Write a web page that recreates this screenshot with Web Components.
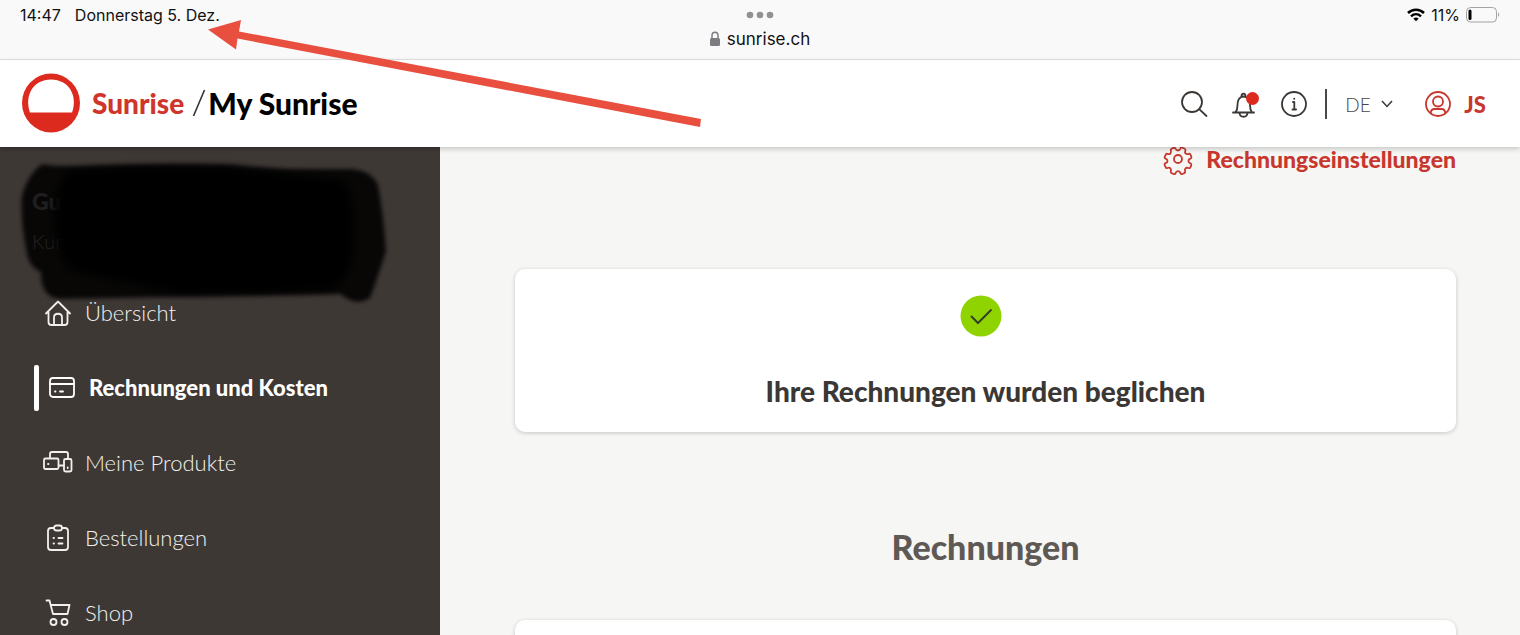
<!DOCTYPE html>
<html lang="de">
<head>
<meta charset="utf-8">
<meta name="viewport" content="width=device-width, initial-scale=1">
<title>My Sunrise – Rechnungen und Kosten</title>
<style>
  html, body { margin: 0; height: 100%; }
  body { font-family: Lato, "Open Sans", sans-serif; color: #3b3734; background: #f6f6f4; }
</style>
</head>
<body>
<sunrise-app></sunrise-app>
<script>
const define = (name, html, setup) => customElements.define(name, class extends HTMLElement {
  constructor() {
    super();
    const t = document.createElement('template');
    t.innerHTML = html;
    this.attachShadow({ mode: 'open' }).append(t.content.cloneNode(true));
  }
  connectedCallback() { if (setup) setup(this, this.shadowRoot); }
});

/* Line icons, drawn on a 28 unit grid */
const ICONS = {
  search: '<circle cx="12" cy="12" r="10"/><path d="M19.200 19.200L26.500 26"/>',
  bell: '<path d="M3 22.500h21M5.500 22.500c1.500-2 2-3.500 2-7.500 0-5 2.200-8.500 6-8.500s6.500 3.500 6.500 8.500c0 4 .5 5.500 2 7.500M11.500 6.300c0-3.500 4-3.500 4 0M9.500 23c.5 5 7.500 5 8 0"/><circle cx="22.500" cy="8.500" r="6.500" fill="#dc2a1e" stroke="none"/>',
  info: '<circle cx="14" cy="14" r="12"/><path d="M13 12h1.300v7.500M12.500 19.500h3.600"/><circle cx="14.200" cy="8.700" r="1" fill="currentColor" stroke="none"/>',
  user: '<circle cx="14" cy="14" r="12"/><circle cx="14" cy="11.500" r="5"/><path d="M6.800 23c0-2.800 2-4 4-4h6.400c2 0 4 1.200 4 4"/>',
  gear: '<circle cx="14" cy="14" r="4"/><path d="M11.500 3.500q.8 2 2.500 2t2.500-2q.3-1.500 2-.8l2.200 1q1.300.7.600 2.100-.7 1.800.400 2.700t2.900.400q1.500-.5 2 1l.8 2q.3 1.300-1.100 1.800-1.900.8-1.900 2.300t1.900 2.300q1.400.5 1 1.800l-.9 2.200q-.6 1.300-2 .7-1.800-.6-2.900.4t-.4 2.900q.5 1.300-.8 1.900l-2 .8q-1.500.5-1.900-.9-.7-1.900-2.400-1.900t-2.500 2q-.5 1.400-1.900.8l-2-.9q-1.300-.6-.8-2 .7-1.800-.400-2.800t-2.900-.3q-1.400.5-1.900-.9l-.9-2q-.5-1.400.9-1.900 1.900-.7 1.900-2.300t-1.900-2.300q-1.400-.5-.9-1.800l.9-2q.600-1.400 1.900-.9 1.800.6 2.900-.4t.4-2.800q-.5-1.400.8-2l2.100-.9q1.300-.5 1.800.8z"/>',
  home: '<path d="M2 14.500L14 2.500l12 12M4.500 13v10c0 2 1 3 3 3h13c2 0 3-1 3-3V13M10 26v-7.500c0-5 8-5 8 0V26"/>',
  card: '<rect x="2" y="4" width="24" height="19" rx="3"/><path d="M2 10h24M7 17.500h.5M12 17.500h3"/>',
  devices: '<path d="M6 9V5c0-1.500.5-2 2-2h14c1.500 0 2 .5 2 2v5M15 16.500h5"/><rect x="0" y="9.500" width="14.500" height="10.500" rx="1.500"/><rect x="20" y="10" width="7.500" height="12.500" rx="1.500"/><path d="M4 15h.5M23.700 18.500v.5"/>',
  clipboard: '<path d="M10 4H7C5 4 4 5 4 7v16c0 2 1 3 3 3h14c2 0 3-1 3-3V7c0-2-1-3-3-3h-3"/><rect x="10" y="1.500" width="8" height="5" rx="2.500"/><path d="M9.500 14h.5M14.500 14h4M9.500 19.500h.5M14.500 19.500h4"/>',
  cart: '<path d="M2.500 1.500h3l3.500 13.500h14.500L25.500 6H6.800"/><circle cx="9.500" cy="23" r="3"/><circle cx="20.500" cy="23" r="3"/>'
};
define('line-icon', `<style>
  :host { display: block; flex: none; width: 28px; height: 28px; }
  svg { display: block; width: 100%; height: 100%; overflow: visible; fill: none; stroke: currentColor; stroke-width: 1.800; stroke-linecap: round; stroke-linejoin: round; }
</style><svg viewBox="0 0 28 28" aria-hidden="true"></svg>`,
  (el, root) => { root.querySelector('svg').innerHTML = ICONS[el.getAttribute('name')]; });

define('status-bar', `<style>
  :host { display: grid; grid-template-columns: 1fr auto 1fr; align-items: start; height: 60px; box-sizing: border-box; padding: 0 20px; background: #f9f9f9; border-bottom: 1px solid #e2e2e2; color: #111; font: 16px/30px Inter, sans-serif; flex: none; }
  .left, .right { display: flex; align-items: center; }
  .left { gap: 14px; }
  .right { justify-content: flex-end; gap: 6px; }
  .center { display: flex; flex-direction: column; align-items: center; }
  .dots { display: block; margin: 11px 0 8px; }
  .site { display: flex; align-items: center; gap: 7px; font-size: 17px; line-height: 24px; }
  svg { display: block; }
</style>
<div class="left"><span>14:47</span><span>Donnerstag 5. Dez.</span></div>
<div class="center">
  <svg class="dots" width="28" height="8" fill="#929292" aria-hidden="true"><circle cx="4" cy="4" r="3.300"/><circle cx="14" cy="4" r="3.300"/><circle cx="24" cy="4" r="3.300"/></svg>
  <div class="site"><svg width="10" height="16" aria-hidden="true"><rect y="7" width="10" height="8" rx="1.500" fill="#7c7c80"/><path d="M2 8V4.500c0-4.500 6-4.500 6 0V8" fill="none" stroke="#7c7c80" stroke-width="1.500"/></svg><span>sunrise.ch</span></div>
</div>
<div class="right">
  <svg width="18" height="14" viewBox="0 0 18 14" fill="none" stroke="#000" stroke-width="2.500" aria-hidden="true"><path d="M1 5C5.500.6 12.500.6 17 5M4 8.300c3-2.800 7-2.800 10 0"/><path d="M6.300 10.500c1.600-1.400 3.800-1.400 5.400 0L9 13.300z" fill="#000" stroke="none"/></svg>
  <span>11%</span>
  <svg width="34" height="16" aria-hidden="true"><rect x=".5" y=".5" width="30" height="14.500" rx="4" fill="none" stroke="#a3a3a3"/><rect x="2.500" y="2.500" width="3" height="10.500" rx="1.500"/><path d="M32 5.500q2.500 2.200 0 4.500z" fill="#a3a3a3"/></svg>
</div>`);

define('brand-mark', `<style>
  :host { display: block; }
  a { display: flex; align-items: center; color: #000; text-decoration: none; font-weight: 900; font-size: 30px; line-height: 36px; }
  .name { color: #d0352b; font-size: 28px; margin: 0 8px 0 12px; }
  svg { display: block; }
</style>
<a href="#"><svg width="58" height="60" viewBox="0 0 58 60" aria-hidden="true"><ellipse cx="29" cy="30" rx="29" ry="29.500" fill="#dc2a1e"/><path d="M8 39.500C2 23 11 6.500 29 6.500S56 23 50 39.500z" fill="#fff"/></svg><span class="name">Sunrise</span><svg width="16" height="32" aria-hidden="true"><path d="M1.500 29L12.500 3" stroke="#333" stroke-width="1.600"/></svg><span>My Sunrise</span></a>`);

define('site-header', `<style>
  :host { display: flex; align-items: center; justify-content: space-between; height: 87px; box-sizing: border-box; padding: 0 34px 2px 22px; background: #fff; box-shadow: 0 2px 5px #0003; position: relative; z-index: 1; flex: none; }
  .tools { display: flex; align-items: center; color: #3b3734; padding-top: 2px; }
  button { display: block; padding: 0; border: 0; background: none; color: inherit; margin-right: 22px; }
  .rule { width: 2px; height: 30px; background: #4a4644; margin: 0 18px 0 -5px; }
  label { display: flex; align-items: center; gap: 10px; margin-right: 31px; }
  select { appearance: none; border: 0; padding: 2px 0 0; margin: 0; background: none; color: #4a4644; font: 300 19px/28px Lato, sans-serif; width: 26px; }
  .account { display: flex; align-items: center; gap: 12px; color: #c8372d; text-decoration: none; font-weight: 900; font-size: 22px; line-height: 28px; }
  .account span { padding-top: 2px; }
</style>
<brand-mark></brand-mark>
<div class="tools">
  <button type="button" aria-label="Suche"><line-icon name="search"></line-icon></button>
  <button type="button" aria-label="Benachrichtigungen"><line-icon name="bell"></line-icon></button>
  <button type="button" aria-label="Information"><line-icon name="info"></line-icon></button>
  <span class="rule"></span>
  <label><select aria-label="Sprache"><option>DE</option></select><svg width="12" height="8" fill="none" stroke="#3b3734" stroke-width="1.500" aria-hidden="true"><path d="M1 1l5 5.500L11 1"/></svg></label>
  <a class="account" href="#"><line-icon name="user"></line-icon><span>JS</span></a>
</div>`);

define('nav-item', `<style>
  :host { display: block; }
  a { display: flex; align-items: center; height: 75px; padding-left: 10px; gap: 13px; color: #f2f0ee; text-decoration: none; font-weight: 300; font-size: 22px; line-height: 28px; }
  :host([active]) a { padding-left: 0; font-weight: 900; color: #fff; }
  :host([active]) a::before { content: ""; width: 5px; height: 46px; border-radius: 2px; background: #fff; margin-right: -4px; }
</style><a href="#"><line-icon></line-icon><span><slot></slot></span></a>`,
  (el, root) => {
    const icon = document.createElement('line-icon');
    icon.setAttribute('name', el.getAttribute('icon'));
    root.querySelector('line-icon').replaceWith(icon);
    if (el.hasAttribute('active')) root.querySelector('a').setAttribute('aria-current', 'page');
  });

define('side-bar', `<style>
  :host { display: block; position: relative; background: #3e3835; }
  header { height: 128px; box-sizing: border-box; padding: 40px 32px 0; color: #fff; }
  h2, p { margin: 0; line-height: 28px; }
  h2 { font-size: 23px; font-weight: 900; }
  p { font-size: 20px; font-weight: 300; margin-top: 12px; }
  nav { padding-left: 34px; }
  .marker { position: absolute; left: 0; top: 0; pointer-events: none; }
</style>
<header><h2>Guten Tag</h2><p>Kundennummer</p></header>
<svg class="marker" width="440" height="170" aria-hidden="true">
  <defs>
    <filter id="soft"><feGaussianBlur stdDeviation="2"/></filter>
    <filter id="softer"><feGaussianBlur stdDeviation="4"/></filter>
  </defs>
  <path filter="url(#soft)" fill="#050303" fill-opacity=".88" d="M42 17Q60 20 85 19Q150 16 230 18Q260 21 290 22H352Q372 24 378 38Q384 70 386 104Q378 130 370 151Q356 160 340 147Q280 148 220 149L60 152Q40 150 41 125Q28 120 26 102Q20 70 22 48Q28 27 42 17Z"/>
  <path filter="url(#softer)" d="M70 23Q150 18 230 20Q270 26 345 34Q357 60 353 110Q345 141 325 143Q240 147 180 146Q110 133 70 123Q52 100 55 62Q57 35 70 23Z"/>
</svg>
<nav aria-label="Hauptnavigation">
  <nav-item icon="home">Übersicht</nav-item>
  <nav-item icon="card" active>Rechnungen und Kosten</nav-item>
  <nav-item icon="devices">Meine Produkte</nav-item>
  <nav-item icon="clipboard">Bestellungen</nav-item>
  <nav-item icon="cart">Shop</nav-item>
</nav>`);

define('content-card', `<style>
  :host { display: flex; flex-direction: column; align-items: center; box-sizing: border-box; min-height: 163px; padding: 26px 24px 22px; border-radius: 10px; background: #fff; box-shadow: 0 1px 4px #0003; }
</style><slot></slot>`);

define('billing-view', `<style>
  :host { display: block; padding: 0 64px 0 75px; margin-top: -4px; }
  .settings { display: flex; justify-content: flex-end; margin-bottom: 94px; }
  .settings a { display: flex; align-items: center; gap: 14px; color: #c8372d; text-decoration: none; font-weight: 900; font-size: 23px; line-height: 32px; }
  svg { display: block; margin-right: 10px; }
  h1, h2 { margin: 0; text-align: center; font-weight: 900; }
  h1 { font-size: 28px; line-height: 36px; margin-top: 36px; }
  h2 { font-size: 34px; line-height: 40px; margin: 95px 0 53px; color: #5f5955; }
</style>
<div class="settings"><a href="#"><line-icon name="gear"></line-icon><span>Rechnungseinstellungen</span></a></div>
<content-card>
  <svg width="42" height="42" aria-hidden="true"><circle cx="21" cy="21" r="20.500" fill="#8fd400"/><path d="M11 21l7 7L31.500 14.500" fill="none" stroke="#34402a" stroke-width="2"/></svg>
  <h1>Ihre Rechnungen wurden beglichen</h1>
</content-card>
<h2>Rechnungen</h2>
<content-card></content-card>`);

define('sunrise-app', `<style>
  :host { display: flex; flex-direction: column; position: relative; height: 100vh; overflow: hidden; }
  .body { display: grid; grid-template-columns: 440px minmax(0, 1fr); flex: 1; min-height: 0; }
  .arrow { position: absolute; left: 208px; top: 19px; z-index: 2; pointer-events: none; }
</style>
<status-bar></status-bar>
<site-header></site-header>
<div class="body"><side-bar></side-bar><billing-view></billing-view></div>
<svg class="arrow" width="494" height="110" fill="#e94f3f" aria-hidden="true"><path d="M0 10.500L33 1 31 12.500 493 100 492 108 29.500 19.500 28 30.500z"/></svg>`);
</script>
</body>
</html>
